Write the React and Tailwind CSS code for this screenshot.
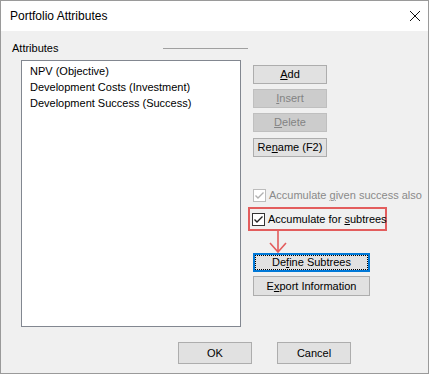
const items = ['NPV (Objective)', 'Development Costs (Investment)', 'Development Success (Success)']

function Btn({ children, disabled, className = '' }) {
  return (
    <div
      className={`flex h-[19px] w-[74px] items-center justify-center border text-[11px] leading-none ${
        disabled ? 'border-[#bfbfbf] bg-[#cccccc] text-[#838383]' : 'border-[#adadad] bg-[#e1e1e1] text-black'
      } ${className}`}
    >
      {children}
    </div>
  )
}

function Check({ disabled }) {
  return (
    <svg width="13" height="13" viewBox="0 0 13 13" className="shrink-0">
      <rect x="0.5" y="0.5" width="12" height="12" fill="#fff" stroke={disabled ? '#bcbcbc' : '#333'} />
      <path d="M2.5 6.5 L5 9 L10.5 3.5" fill="none" stroke={disabled ? '#b0b0b0' : '#222'} strokeWidth="1.4" />
    </svg>
  )
}

export default function App() {
  return (
    <div
      className="flex h-[374px] w-[429px] flex-col border border-[#9a9a9a] bg-[#f0f0f0] text-black"
      style={{ fontFamily: '"Liberation Sans", Arial, sans-serif' }}
    >
      <div className="flex h-[30px] items-center justify-between bg-white pl-[9px] pr-[7px]">
        <span className="text-[12px]">Portfolio Attributes</span>
        <svg width="12" height="12" viewBox="0 0 12 12">
          <path d="M1 1 L11 11 M11 1 L1 11" stroke="#111" strokeWidth="1" />
        </svg>
      </div>

      <div className="mt-[11px] flex h-[13px] items-center pl-[11px] text-[11px]">
        <span className="w-[151px]">Attributes</span>
        <div className="h-px w-[85px] bg-[#a0a0a0]" />
      </div>

      <div className="mt-[5px] flex pl-[20px]">
        <div className="h-[267px] w-[220px] border border-[#828790] bg-white pl-[8px] pt-[2px] text-[11px]">
          {items.map((it) => (
            <div key={it} className="h-[16px] leading-[16px]">
              {it}
            </div>
          ))}
        </div>

        <div className="relative ml-[12px] flex flex-col pt-[5px] text-[11px]">
          <Btn><span><u>A</u>dd</span></Btn>
          <Btn disabled className="mt-[5px]"><span><u>I</u>nsert</span></Btn>
          <Btn disabled className="mt-[5px]"><span><u>D</u>elete</span></Btn>
          <Btn className="mt-[6px]"><span>Re<u>n</u>ame (F2)</span></Btn>

          <div className="mt-[32px] flex h-[13px] items-center gap-[3px] text-[#8a8a8a]">
            <Check disabled />
            <span className="whitespace-nowrap">Accumulate <u>g</u>iven success also</span>
          </div>

          <div className="-ml-[5px] mt-[5px] flex h-[24px] w-[139px] items-center gap-[3px] border-2 border-[#e35d5d] pl-[2px]">
            <Check />
            <span className="whitespace-nowrap">Accumulate for <u>s</u>ubtrees</span>
          </div>

          <svg className="absolute left-[16px] top-[171px]" width="20" height="22" viewBox="0 0 20 22">
            <path d="M9 0 L9 21 M1 12 L9 21 L17 12" fill="none" stroke="#e35d5d" strokeWidth="1.6" />
          </svg>

          <div className="mt-[22px] flex h-[19px] w-[117px] items-center justify-center border-2 border-[#0078d7] bg-[#e1e1e1] outline-1 -outline-offset-[3px] outline-dotted outline-black">
            <span>De<u>f</u>ine Subtrees</span>
          </div>
          <div className="mt-[4px] flex h-[20px] w-[117px] items-center justify-center border border-[#adadad] bg-[#e1e1e1]">
            <span>E<u>x</u>port Information</span>
          </div>
        </div>
      </div>

      <div className="mt-[15px] flex gap-[25px] pl-[177px]">
        <div className="flex h-[22px] w-[74px] items-center justify-center border border-[#adadad] bg-[#e1e1e1] text-[11px]">OK</div>
        <div className="flex h-[22px] w-[74px] items-center justify-center border border-[#adadad] bg-[#e1e1e1] text-[11px]">Cancel</div>
      </div>
    </div>
  )
}
